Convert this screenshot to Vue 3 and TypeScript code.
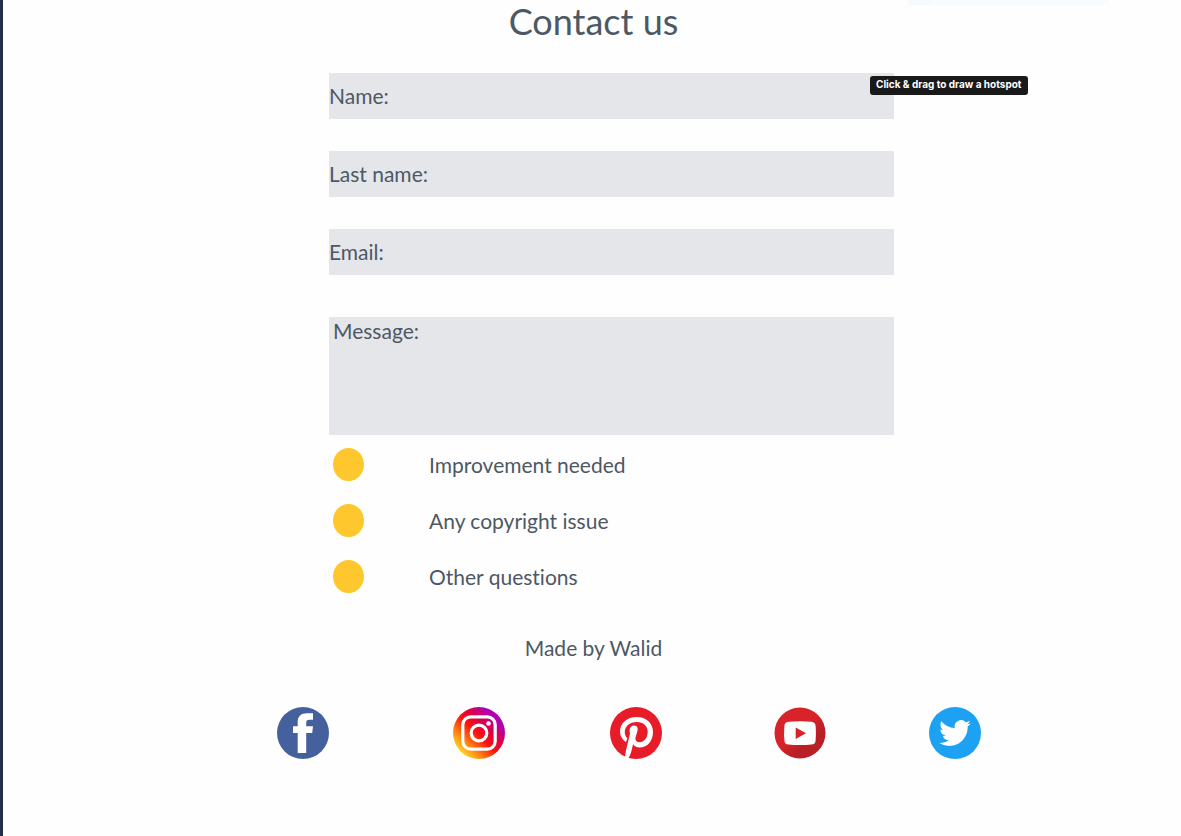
<script setup lang="ts">
import { ref } from 'vue'

interface Field {
  id: string
  label: string
  type: string
}

const fields: Field[] = [
  { id: 'name', label: 'Name:', type: 'text' },
  { id: 'last-name', label: 'Last name:', type: 'text' },
  { id: 'email', label: 'Email:', type: 'email' },
]

const topics: string[] = ['Improvement needed', 'Any copyright issue', 'Other questions']

const values = ref<Record<string, string>>({})
const message = ref('')
const topic = ref('')
</script>

<template>
  <main class="page">
    <div class="strip" aria-hidden="true"></div>
    <h1 class="title">Contact us</h1>

    <form class="form" @submit.prevent>
      <div class="fields">
        <div v-for="f in fields" :key="f.id" class="field">
          <label :for="f.id">{{ f.label }}</label>
          <input :id="f.id" v-model="values[f.id]" :type="f.type" />
        </div>
        <div class="field message">
          <label for="message">Message:</label>
          <textarea id="message" v-model="message"></textarea>
        </div>
        <div class="tooltip" role="tooltip">Click &amp; drag to draw a hotspot</div>
      </div>

      <div class="topics">
        <label v-for="t in topics" :key="t" class="topic">
          <input v-model="topic" type="radio" name="topic" :value="t" />
          <span>{{ t }}</span>
        </label>
      </div>
    </form>

    <p class="credit">Made by Walid</p>

    <nav class="social" aria-label="Social media">
      <a href="#" aria-label="Facebook">
        <svg viewBox="0 0 52 52">
          <circle cx="26" cy="26" r="26" fill="#45619d" />
          <path fill="#fff" d="M20.700 46V26H16v-6.700h4.700v-4.300C20.700 9.300 24 6.200 30 6.200h6v6.600h-3.600c-2.500 0-3.200 1.100-3.200 3.200v3.300h6.800L35.200 26h-6v20z" />
        </svg>
      </a>
      <a href="#" aria-label="Instagram">
        <svg viewBox="0 0 52 52">
          <defs>
            <linearGradient id="ig" x1="0.12" y1="0.88" x2="0.86" y2="0.14">
              <stop offset="0" stop-color="#ffdf2b" />
              <stop offset="0.22" stop-color="#ff8a12" />
              <stop offset="0.48" stop-color="#fa1410" />
              <stop offset="0.66" stop-color="#e3003c" />
              <stop offset="0.88" stop-color="#b400a6" />
              <stop offset="1" stop-color="#aa00bb" />
            </linearGradient>
          </defs>
          <circle cx="26" cy="26" r="26" fill="url(#ig)" />
          <g fill="none" stroke="#fff" stroke-width="3.2">
            <rect x="9.800" y="9.800" width="32.400" height="32.400" rx="8" />
            <circle cx="26" cy="26" r="7.800" />
          </g>
          <circle cx="35.500" cy="16.500" r="2.300" fill="#fff" />
        </svg>
      </a>
      <a href="#" aria-label="Pinterest">
        <svg viewBox="0 0 52 52">
          <circle cx="26" cy="26" r="26" fill="#e81c28" />
          <path fill="#fff" d="M15.900 35.100C12.200 32.500 10 29 10 24.500 10 16.200 17 10 26.600 10 36.400 10 43 16.300 43 24.800 43 33.700 37.600 40.600 29.700 40.600c-3 0-5.700-1.500-6.600-3.500l-1.800 7.300c-.6 2.400-1.900 5-3.100 7-1-.2-2.300-.700-3.100-1.300.2-2.200.4-4.400.9-6.500l4.100-17.300c-1.400-4.100.3-7.900 3.900-7.900 3.400 0 4.300 2.800 3.300 6.200l-1.700 5.600c-.8 3.300 1.300 5.100 4.200 5.100 4.700 0 7.900-4.800 7.900-10.700 0-5.600-4.300-9.700-10.900-9.700-7.500 0-12 4.500-12 10.200 0 2.400.8 4.500 2.600 6.300z" />
        </svg>
      </a>
      <a href="#" aria-label="YouTube">
        <svg viewBox="0 0 52 52">
          <defs>
            <linearGradient id="yt" x1="0.2" y1="0.15" x2="0.8" y2="0.85">
              <stop offset="0.45" stop-color="#d8232a" />
              <stop offset="0.75" stop-color="#b92026" />
            </linearGradient>
          </defs>
          <circle cx="26" cy="26" r="25.500" fill="url(#yt)" />
          <path fill="#fff" d="M14.500 14.800c7-.8 16-.8 23 0 2.600.3 3.900 1.600 4.100 4.100.4 5 .4 9.600 0 14.500-.2 2.500-1.500 3.800-4.100 4.100-7 .700-16 .700-23 0-2.600-.3-3.900-1.600-4.100-4.100-.4-4.900-.4-9.500 0-14.500.2-2.500 1.500-3.800 4.100-4.100z" />
          <path fill="#d8232a" d="M21.700 20.400v11.600L32 26.200z" />
        </svg>
      </a>
      <a href="#" aria-label="Twitter">
        <svg viewBox="0 0 52 52">
          <circle cx="26" cy="26" r="26" fill="#1da1f2" />
          <g transform="translate(10.200 10.200) scale(1.320)">
            <path fill="#fff" d="M23.950 4.570a10 10 0 0 1-2.820.77 4.960 4.960 0 0 0 2.160-2.720c-.95.550-2 .95-3.120 1.190a4.920 4.920 0 0 0-8.380 4.480C7.690 8.090 4.070 6.130 1.640 3.160a4.820 4.820 0 0 0-.67 2.470c0 1.710.87 3.210 2.190 4.100a4.900 4.900 0 0 1-2.230-.62v.06a4.920 4.920 0 0 0 3.950 4.830 5 5 0 0 1-2.210.08 4.940 4.940 0 0 0 4.600 3.420A9.870 9.870 0 0 1 0 19.540a14 14 0 0 0 7.550 2.210c9.050 0 14-7.500 14-13.980 0-.21 0-.42-.02-.63a9.940 9.940 0 0 0 2.460-2.550z" />
          </g>
        </svg>
      </a>
    </nav>
  </main>
</template>

<style>
body {
  margin: 0;
  background: #fefefe;
}
</style>

<style scoped>
.page {
  box-sizing: border-box;
  position: relative;
  min-height: 100vh;
  border-left: 3px solid #252f45;
  background: #fefefe;
  color: #4d5865;
  font-family: Lato, "Liberation Sans", sans-serif;
  font-size: 21px;
  font-variant-ligatures: none;
  line-height: 32px;
}

.strip {
  position: absolute;
  top: 0;
  right: 72px;
  width: 201px;
  height: 5px;
  background: linear-gradient(to right, #f4faff 24px, #f9fcff 24px);
}

.title {
  margin: 0;
  padding: 0 0 31px 3px;
  font-size: 36px;
  line-height: 42px;
  font-weight: 400;
  text-align: center;
}

.form {
  display: grid;
  grid-template-columns: 326fr 565fr 287fr;
}

.fields,
.topics {
  grid-column: 2;
  display: flex;
  flex-direction: column;
}

.fields {
  position: relative;
  gap: 32px;
}

.field {
  display: flex;
  align-items: center;
  height: 46px;
  background: #e5e6ea;
}

.message {
  align-items: flex-start;
  height: 118px;
  margin-top: 10px;
  padding-left: 4px;
  box-sizing: border-box;
}

.message label {
  line-height: 28px;
}

.field input,
.field textarea {
  flex: 1;
  min-width: 0;
  box-sizing: border-box;
  height: 100%;
  margin: 0;
  padding: 0 8px;
  border: 0;
  outline: 0;
  background: transparent;
  color: inherit;
  font: inherit;
  resize: none;
}

.tooltip {
  position: absolute;
  top: 3px;
  left: calc(100% - 24px);
  padding: 0 6px 2px;
  border-radius: 3px;
  background: #191919;
  color: #fff;
  font-family: Inter, "Liberation Sans", sans-serif;
  font-size: 10px;
  font-weight: 700;
  line-height: 17px;
  white-space: nowrap;
}

.topics {
  gap: 23px;
  padding: 13px 0 0 4px;
}

.topic {
  display: flex;
  align-items: center;
  gap: 65px;
  height: 33px;
}

.topic input {
  appearance: none;
  width: 31px;
  height: 33px;
  margin: 0;
  border-radius: 50%;
  background: #ffc72e;
}

.topic input:checked {
  box-shadow: inset 0 0 0 4px #ffc72e, inset 0 0 0 16px #4d5865;
}

.credit {
  margin: 39px 0 43px;
  padding-left: 3px;
  text-align: center;
}

.social {
  display: grid;
  grid-template-columns: 176fr 157fr 164fr 155fr 52px;
  margin: 0 17% 0 23.26%;
}

.social a {
  width: 52px;
  height: 52px;
}

.social svg {
  display: block;
  width: 52px;
  height: 52px;
}
</style>
